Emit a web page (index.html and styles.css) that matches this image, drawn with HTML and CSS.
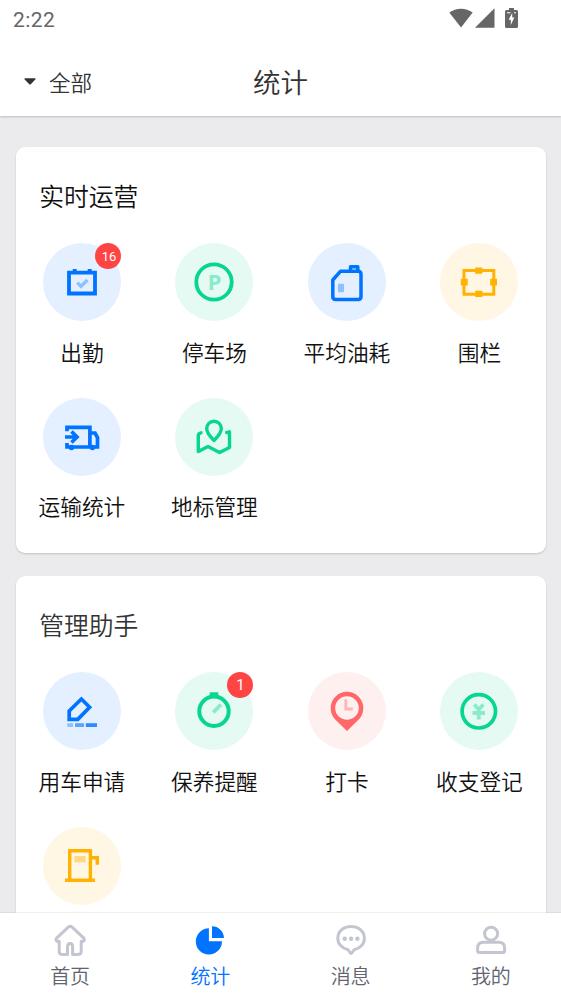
FILE: index.html
```html
<!DOCTYPE html>
<html lang="zh-CN">
<head>
<meta charset="utf-8">
<title>统计</title>
<link rel="stylesheet" href="styles.css">
</head>
<body>
<div class="app">
  <header class="top">
    <div class="status">
      <span class="time">2:22</span>
      <span class="signals">
        <svg width="24" height="20" viewBox="0 0 24 20"><path d="M.3 4.6C7-.6 17-.6 23.7 4.6L12 19.5Z"/></svg>
        <svg width="20" height="20" viewBox="0 0 20 20"><path d="M0 19.7 19.5.3V19.7Z"/></svg>
        <svg class="battery" width="13" height="20" viewBox="0 0 13 20"><path d="M4 0H9V2H11.5Q13 2 13 3.5V18.5Q13 20 11.5 20H1.500Q0 20 0 18.500V3.500Q0 2 1.500 2H4Z"/><path class="bolt" d="M2 4.200H5.500V5.200H2ZM9 4.200H11V5.200H9ZM7.200 5V9.600H9.300L5.800 17V11.800H3.600Z"/></svg>
      </span>
    </div>
    <div class="bar">
      <div class="filter"><svg width="12" height="7" viewBox="0 0 12 7"><path d="M1 .2H11Q12 .5 11.300 1.400L7 6Q6 7 5 6L.7 1.400Q0 .5 1 .2Z"/></svg><span>全部</span></div>
      <h1>统计</h1>
    </div>
  </header>

  <main class="content">
    <section class="card first">
      <h2 class="dark">实时运营</h2>
      <div class="grid">
        <div class="item"><div class="disc blue">
          <svg viewBox="0 0 78 78"><path d="M26 29.700H52V50.500H26Z" stroke-width="3.800"/><path class="solid" d="M29.700 26H33.700V29H29.700ZM44.700 26H48.700V29H44.700Z"/><path class="soft" d="M34.300 39.600 38 43.300 44.500 37" stroke-width="3.400"/></svg>
          <span class="badge">16</span></div><span class="label">出勤</span></div>
        <div class="item"><div class="disc green">
          <svg viewBox="0 0 78 78"><circle cx="39" cy="39" r="17.700" stroke-width="3.800"/><text x="39.700" y="46.700" text-anchor="middle">P</text></svg>
          </div><span class="label">停车场</span></div>
        <div class="item"><div class="disc blue">
          <svg viewBox="0 0 78 78"><path d="M24.800 37 32.400 28.300H50Q53 28.300 53 31.300V53.500Q53 56.500 50 56.500H27.800Q24.800 56.500 24.800 53.500ZM42.500 28V23.700H49.800V28" stroke-width="3.500" stroke-linejoin="round"/><rect class="softfill" x="30" y="40.700" width="6" height="8.600" rx="1"/></svg>
          </div><span class="label">平均油耗</span></div>
        <div class="item"><div class="disc yellow">
          <svg viewBox="0 0 78 78"><path d="M24 27.600H53.800V51.200H24Z" stroke-width="3"/><path class="solid" d="M35.200 24.400H42.400V30.700H35.200ZM35.200 47.700H42.400V54H35.200ZM20.800 35.700H27.700V42.500H20.800ZM50.200 35.700H57V42.500H50.200Z"/></svg>
          </div><span class="label">围栏</span></div>
        <div class="item"><div class="disc blue">
          <svg viewBox="0 0 78 78"><path d="M24 33.300V29.300H46.900V49M24 45V49H54.500V39.500L52 35H47" stroke-width="3.700"/><path d="M22 39H34M28.500 33.500 34 39 28.500 44.500" stroke-width="3.700"/><circle class="solid" cx="28.500" cy="49.500" r="2.800"/><circle class="solid" cx="49.400" cy="49.500" r="2.800"/></svg>
          </div><span class="label">运输统计</span></div>
        <div class="item"><div class="disc green">
          <svg viewBox="0 0 78 78"><path d="M39 42.500C35.500 39 31.700 34.500 31.700 30.500A7.300 7.300 0 0 1 46.300 30.500C46.300 34.500 42.500 39 39 42.500ZM26 34.800Q23.300 35.500 23.300 37.500V53.500L33 48.600 44.500 54.500 54.500 49.500V33.800L51.700 34.500" stroke-width="3.400" stroke-linejoin="round" stroke-linecap="round"/></svg>
          </div><span class="label">地标管理</span></div>
      </div>
    </section>

    <section class="card second">
      <h2>管理助手</h2>
      <div class="grid">
        <div class="item"><div class="disc blue">
          <svg viewBox="0 0 78 78"><path d="M26.200 47.300V39L38.400 27 46.600 35.200 34.800 47.300Z" stroke-width="3.700"/><path class="softfill" d="M24.300 51.200H30V55H24.300Z"/><path class="solid" opacity=".6" d="M32 51.200H41V55H32Z"/><path class="solid" opacity=".8" d="M42.800 51.200H54V55H42.800Z"/></svg>
          </div><span class="label">用车申请</span></div>
        <div class="item"><div class="disc green">
          <svg viewBox="0 0 78 78"><circle cx="39" cy="39.300" r="14.700" stroke-width="4"/><path class="solid" d="M34.700 20.300H43.300V25H34.700Z"/><path class="soft" d="M38.200 40.300 46 32.500" stroke-width="3.800"/></svg>
          <span class="badge single">1</span></div><span class="label">保养提醒</span></div>
        <div class="item"><div class="disc red">
          <svg viewBox="0 0 78 78"><path class="solid" fill-rule="evenodd" d="M39 59 27 47.200A16.300 16.300 0 1 1 51 47.200ZM39 24.200A11.800 11.800 0 1 0 39 47.800A11.800 11.800 0 1 0 39 24.200Z"/><path class="soft" d="M37.800 28.300V37H43.700" stroke-width="2.800" stroke-linecap="round"/></svg>
          </div><span class="label">打卡</span></div>
        <div class="item"><div class="disc green">
          <svg viewBox="0 0 78 78"><circle cx="38.800" cy="39.300" r="16.700" stroke-width="3.700"/><path class="soft" d="M34.200 32.500 38.800 37.500 43.400 32.500M32.500 41H45M38.800 37V47.600" stroke-width="3.800"/></svg>
          </div><span class="label">收支登记</span></div>
        <div class="item"><div class="disc yellow">
          <svg viewBox="0 0 78 78"><path d="M26.700 53.300V23.800H47.400V53.300M22 53.300H52M48 30.700H54.300V37.700" stroke-width="3.400"/><path class="softfill" d="M31.400 29H42.700V35.400H31.400Z"/></svg>
          </div></div>
      </div>
    </section>
  </main>

  <nav class="tabs">
    <div class="tab"><svg viewBox="0 0 36 36"><path d="M16.300 5.200Q18.200 3.600 20.100 5.200L31.800 16.200Q33.200 18.200 31.500 19.300H29.200V29.500Q29.200 32.400 26.300 32.400H20.600V24.500Q20.600 21.500 18.200 21.500T15.500 24.500V32.400H10Q7.200 32.400 7.200 29.500V19.300H4.900Q3.200 18.200 4.600 16.200Z"/></svg><span>首页</span></div>
    <div class="tab active"><svg viewBox="0 0 36 36"><path d="M16.900 19.300V6.300A13.100 13.100 0 1 0 30 19.300ZM20 16V4.200A11.900 11.900 0 0 1 31.900 16Z"/></svg><span>统计</span></div>
    <div class="tab"><svg viewBox="0 0 36 36"><path d="M18.100 4.500C10.300 4.500 4.800 9.500 4.800 16.200C4.800 22 9 26.300 14.500 27.500C16.500 28 16.300 31.500 18.100 31.500S19.700 28 21.700 27.500C27.200 26.300 31.400 22 31.400 16.200C31.400 9.500 25.900 4.500 18.100 4.500Z"/><g class="dots"><circle cx="11.700" cy="16.700" r="2.200"/><circle cx="18.100" cy="16.700" r="2.200"/><circle cx="24.400" cy="16.700" r="2.200"/></g></svg><span>消息</span></div>
    <div class="tab"><svg viewBox="0 0 36 36"><circle cx="18.100" cy="11.700" r="6.500"/><path d="M10.500 20.200H25.700Q31.600 20.200 31.600 26V28.500Q31.600 30.500 29.600 30.500H6.600Q4.600 30.500 4.600 28.500V26Q4.600 20.200 10.500 20.200Z"/></svg><span>我的</span></div>
  </nav>
</div>
</body>
</html>
```
FILE: styles.css
```css
* { box-sizing: border-box; }
body {
  margin: 0;
  font-family: "Noto Sans CJK SC", sans-serif;
  font-weight: 350;
  color: #333;
}
svg { display: block; }
.app {
  height: 999px;
  display: flex;
  flex-direction: column;
  overflow: hidden;
  background: #ebebed;
}
.top {
  flex: none;
  height: 116px;
  background: #fff;
  box-shadow: 0 1px 2px rgba(0, 0, 0, .2);
}
.status {
  height: 38px;
  padding: 0 43px 0 13px;
  display: flex;
  justify-content: space-between;
}
.time {
  font: 450 21px/40px Roboto, sans-serif;
  letter-spacing: .4px;
  color: #666;
}
.signals { display: flex; gap: 2px; padding-top: 8px; fill: #666; }
.battery { margin-left: 8px; }
.bolt { fill: #fff; }
.bar {
  height: 78px;
  display: grid;
  grid-template-columns: 1fr auto 1fr;
  align-items: center;
  padding: 8px 24px 0;
}
.filter { display: flex; align-items: center; gap: 13px; padding-top: 1px; font-size: 21.5px; line-height: 32px; }
.filter svg { fill: #333; margin-top: -1px; }
h1 { margin: 0; font-size: 27.5px; font-weight: inherit; line-height: 40px; }
.content { flex: 1; min-height: 0; overflow: hidden; padding: 31px 15.5px 0; }
.card {
  background: #fff;
  border-radius: 9px;
  box-shadow: 0 1px 2px rgba(0, 0, 0, .18);
  padding-top: 27.500px;
}
.first { height: 405.500px; margin-bottom: 23.500px; }
.second { height: 500px; }
h2 { margin: 0 0 28.800px; padding-left: 23.700px; font-size: 24.800px; font-weight: inherit; line-height: 40px; }
h2.dark { color: #111; }
.grid { display: grid; grid-template-columns: repeat(4, 132.500px); margin-left: .2px; row-gap: 26.500px; }
.item { display: flex; flex-direction: column; align-items: center; height: 128px; }
.disc { position: relative; width: 78px; height: 78px; border-radius: 50%; }
.disc svg { width: 78px; height: 78px; fill: none; stroke: var(--c); }
.disc .solid { fill: var(--c); stroke: none; }
.disc .soft { stroke: var(--s); }
.disc .softfill { fill: var(--s); stroke: none; }
.disc text { fill: var(--s); stroke: none; font: 700 22px "Noto Sans", sans-serif; }
.blue { --c: #0073ff; --s: #8fc0ff; background: #e4f0ff; }
.green { --c: #07d68f; --s: #8aebca; background: #e4faf3; }
.yellow { --c: #ffb300; --s: #ffd988; background: #fff6e4; }
.red { --c: #ff6769; --s: #ffb5b6; background: #fff0f0; }
.badge {
  position: absolute;
  top: 0;
  right: 0;
  width: 26px;
  height: 26px;
  border-radius: 50%;
  background: #ff4444;
  color: #fff;
  font: 400 13px/27px Roboto, sans-serif;
  padding-left: 2px;
  text-align: center;
}
.single { font-size: 15px; padding-left: 0; }
.label { margin-top: 13.700px; font-size: 21.700px; line-height: 34px; color: #111; white-space: nowrap; }
.tabs {
  flex: none;
  height: 86px;
  display: grid;
  grid-template-columns: repeat(4, 1fr);
  background: #fff;
  box-shadow: 0 -1px 1px rgba(0, 0, 0, .06);
  position: relative;
}
.tab { display: flex; flex-direction: column; align-items: center; padding-top: 9px; color: #5f6470; font-size: 20px; line-height: 30px; }
.tab svg { width: 36px; height: 36px; fill: none; stroke: #c3c6d0; stroke-width: 3; stroke-linejoin: round; }
.dots { fill: #c3c6d0; stroke: none; }
.tab span { margin-top: 3px; }
.active { color: #0073ff; }
.tab.active svg { fill: #0073ff; stroke: none; }
```
